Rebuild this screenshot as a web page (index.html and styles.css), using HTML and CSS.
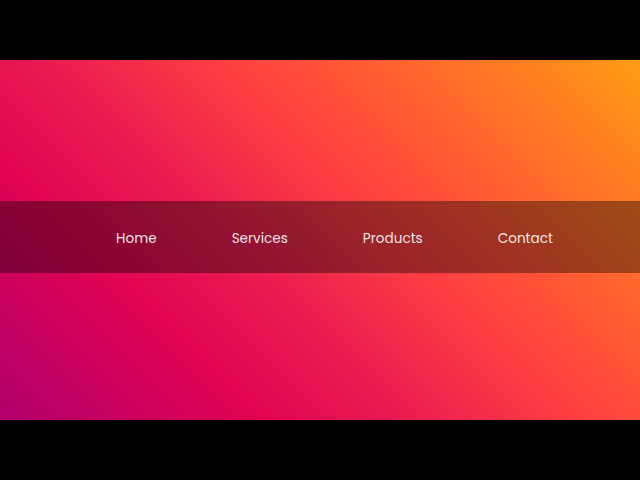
FILE: index.html
```html
<!DOCTYPE html>
<html lang="en">
<head>
<meta charset="utf-8">
<title>Nav</title>
<link rel="stylesheet" href="styles.css">
</head>
<body>
  <section class="hero">
    <nav class="nav">
      <ul class="menu">
        <li class="menu-item"><a class="menu-link" href="#">Home</a></li>
        <li class="menu-item"><a class="menu-link" href="#">Services</a></li>
        <li class="menu-item"><a class="menu-link" href="#">Products</a></li>
        <li class="menu-item"><a class="menu-link" href="#">Contact</a></li>
      </ul>
    </nav>
  </section>
</body>
</html>
```
FILE: styles.css
```css
html, body {
  margin: 0;
  padding: 0;
  height: 100%;
}
body {
  background: #000;
  display: flex;
  flex-direction: column;
  justify-content: center;
  font-family: "Poppins", "Open Sans", "DejaVu Sans", sans-serif;
}
.hero {
  height: 360px;
  display: flex;
  align-items: center;
  background: linear-gradient(45deg, #b0006c 0%, #e00352 25%, #ea1a52 40%, #fa3c44 56%, #ff4a3c 64%, #ff9c14 100%);
}
.nav {
  width: 100%;
  height: 72px;
  margin-bottom: 6px;
  background: rgba(0, 0, 0, 0.38);
  display: flex;
  align-items: center;
}
.menu {
  list-style: none;
  margin: 0;
  padding: 0 0 0 29px;
  width: 100%;
  display: flex;
  justify-content: center;
  gap: 75px;
}
.menu-link {
  color: rgba(255, 255, 255, 0.9);
  text-decoration: none;
  font-size: 13.6px;
  font-weight: 400;
  line-height: 20px;
}
```
